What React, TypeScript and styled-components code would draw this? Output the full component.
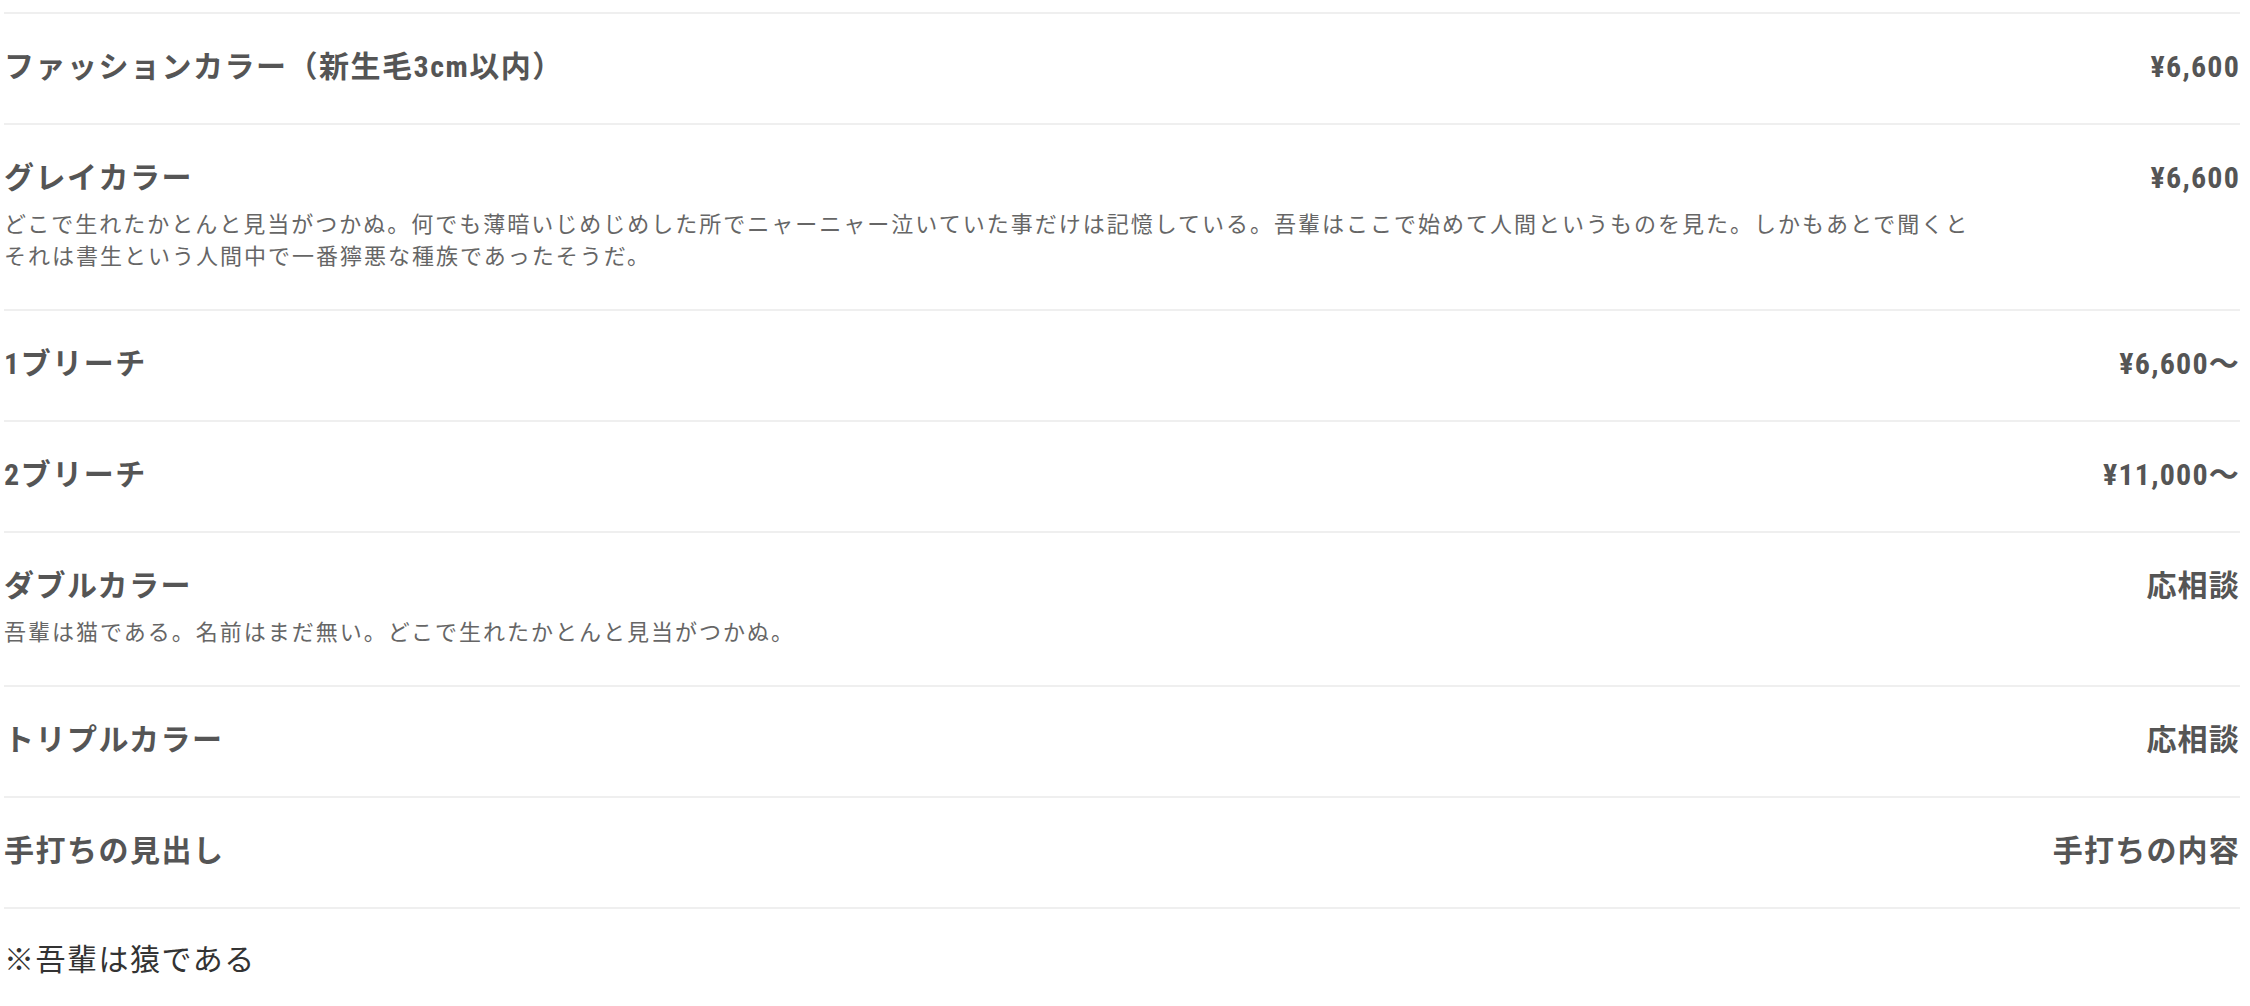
import React from "react";
import styled, { createGlobalStyle } from "styled-components";

const GlobalStyle = createGlobalStyle`
  html, body {
    margin: 0;
    padding: 0;
    background: #ffffff;
  }
  body {
    font-family: "Liberation Sans", "Noto Sans CJK JP", sans-serif;
  }
`;

const Page = styled.div`
  padding: 12px 10px 0 4px;
  font-family: "Liberation Sans", "Noto Sans CJK JP", sans-serif;
`;

const MenuList = styled.ul`
  list-style: none;
  margin: 0;
  padding: 0;
  border-top: 2px solid #efefef;
`;

const MenuRow = styled.li`
  display: flex;
  align-items: flex-start;
  justify-content: space-between;
  padding: 30px 0 34px;
  border-bottom: 2px solid #efefef;
`;

const RowBody = styled.div`
  flex: 1 1 auto;
  min-width: 0;
`;

const Title = styled.h3`
  margin: 0;
  font-family: "Roboto Condensed", "Noto Sans", "Liberation Sans", "Noto Sans CJK JP", sans-serif;
  font-stretch: 75%;
  font-size: 30px;
  line-height: 45px;
  font-weight: 700;
  letter-spacing: 1.5px;
  color: #555555;
`;

const Description = styled.p`
  margin: 9px 0 2px;
  font-size: 22px;
  line-height: 32px;
  font-weight: 400;
  letter-spacing: 2px;
  color: #666666;
`;

const Price = styled.div`
  flex: 0 0 256px;
  text-align: right;
  font-family: "Roboto Condensed", "Noto Sans", "Liberation Sans", "Noto Sans CJK JP", sans-serif;
  font-stretch: 75%;
  font-size: 30px;
  line-height: 45px;
  font-weight: 700;
  letter-spacing: 1.2px;
  color: #555555;
  white-space: nowrap;
`;

const Note = styled.p`
  margin: 0;
  padding: 28px 0 0;
  font-size: 30px;
  line-height: 45px;
  font-weight: 400;
  letter-spacing: 1.5px;
  color: #333333;
`;

type Item = { title: string; price: string; desc?: string };

const items: Item[] = [
  { title: "ファッションカラー（新生毛3cm以内）", price: "¥6,600" },
  {
    title: "グレイカラー",
    price: "¥6,600",
    desc: "どこで生れたかとんと見当がつかぬ。何でも薄暗いじめじめした所でニャーニャー泣いていた事だけは記憶している。吾輩はここで始めて人間というものを見た。しかもあとで聞くとそれは書生という人間中で一番獰悪な種族であったそうだ。",
  },
  { title: "1ブリーチ", price: "¥6,600～" },
  { title: "2ブリーチ", price: "¥11,000～" },
  {
    title: "ダブルカラー",
    price: "応相談",
    desc: "吾輩は猫である。名前はまだ無い。どこで生れたかとんと見当がつかぬ。",
  },
  { title: "トリプルカラー", price: "応相談" },
  { title: "手打ちの見出し", price: "手打ちの内容" },
];

export default function App() {
  return (
    <>
      <GlobalStyle />
      <Page>
        <MenuList>
          {items.map((it) => (
            <MenuRow key={it.title}>
              <RowBody>
                <Title>{it.title}</Title>
                {it.desc && <Description>{it.desc}</Description>}
              </RowBody>
              <Price>{it.price}</Price>
            </MenuRow>
          ))}
        </MenuList>
        <Note>※吾輩は猿である</Note>
      </Page>
    </>
  );
}
